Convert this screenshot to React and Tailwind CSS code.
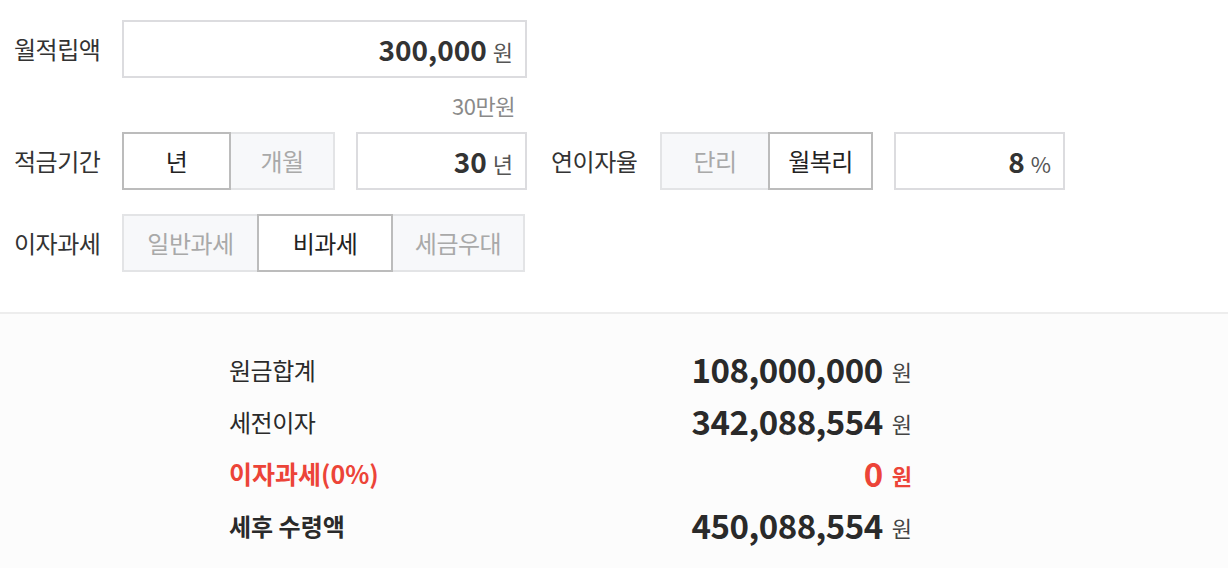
import React from "react";

const font = { fontFamily: '"Noto Sans CJK KR", "Noto Sans", sans-serif' };

function Toggle({ items, active, widths }) {
  return (
    <div className="flex h-[58px]">
      {items.map((item, i) => {
        const on = i === active;
        return (
          <div
            key={item}
            className={
              "flex items-center justify-center border-2 text-[24px] tracking-[-0.5px] " +
              (i > 0 ? "-ml-[2px] " : "") +
              (on
                ? "relative z-10 border-[#bcbcbc] bg-white text-[#222]"
                : "border-[#e3e4e6] bg-[#f7f8fa] text-[#a9a9a9]")
            }
            style={{ width: widths[i] }}
          >
            {item}
          </div>
        );
      })}
    </div>
  );
}

function ValueBox({ value, unit, className }) {
  return (
    <div
      className={
        "flex h-[58px] items-center justify-end border-2 border-[#dcdcdf] bg-white pr-[12px] " +
        className
      }
    >
      <span className="text-[28px] font-bold text-[#333]">{value}</span>
      <span className="ml-[6px] mt-[4px] text-[22px] text-[#555]">{unit}</span>
    </div>
  );
}

function ResultRow({ label, value, red, bold }) {
  const color = red ? "text-[#ec4438]" : "text-[#2a2a2a]";
  let labelCls = "text-[24px] tracking-[-0.5px]";
  if (red) labelCls = "text-[25px] font-bold";
  else if (bold) labelCls = "text-[24px] font-bold";
  return (
    <div className="flex h-[52px] items-center justify-between">
      <span className={labelCls + " " + color}>{label}</span>
      <span className="flex items-center">
        <span className={"text-[33px] font-bold tracking-[-0.5px] " + color}>{value}</span>
        <span className={"ml-[9px] mt-[3px] text-[22px] " + (red ? "font-bold text-[#ec4438]" : "text-[#444]")}>
          원
        </span>
      </span>
    </div>
  );
}

export default function App() {
  return (
    <div className="min-h-[568px] bg-white text-[#333]" style={font}>
      {/* 입력 영역 */}
      <div className="h-[312px] px-[14px] pt-[20px]">
        <div className="flex items-center">
          <span className="w-[108px] text-[24px] tracking-[-0.5px]">월적립액</span>
          <ValueBox value="300,000" unit="원" className="w-[405px]" />
        </div>
        <div className="flex h-[54px] w-[513px] items-center justify-end pr-[12px] text-[22px] tracking-[-0.5px] text-[#8a8a8a]">
          30만원
        </div>
        <div className="flex items-center">
          <span className="w-[108px] text-[24px] tracking-[-0.5px]">적금기간</span>
          <Toggle items={["년", "개월"]} active={0} widths={[109, 106]} />
          <ValueBox value="30" unit="년" className="ml-[21px] w-[171px]" />
          <span className="ml-[24px] w-[109px] text-[24px] tracking-[-0.5px]">연이자율</span>
          <Toggle items={["단리", "월복리"]} active={1} widths={[110, 105]} />
          <ValueBox value="8" unit="%" className="ml-[21px] w-[171px]" />
        </div>
        <div className="mt-[24px] flex items-center">
          <span className="w-[108px] text-[24px] tracking-[-0.5px]">이자과세</span>
          <Toggle items={["일반과세", "비과세", "세금우대"]} active={1} widths={[137, 136, 134]} />
        </div>
      </div>

      {/* 결과 영역 */}
      <div className="min-h-[256px] border-t-2 border-[#ededed] bg-[#fcfcfc] pt-[30px]">
        <div className="ml-[229px] w-[683px]">
          <ResultRow label="원금합계" value="108,000,000" />
          <ResultRow label="세전이자" value="342,088,554" />
          <ResultRow label="이자과세(0%)" value="0" red />
          <ResultRow label="세후 수령액" value="450,088,554" bold />
        </div>
      </div>
    </div>
  );
}
